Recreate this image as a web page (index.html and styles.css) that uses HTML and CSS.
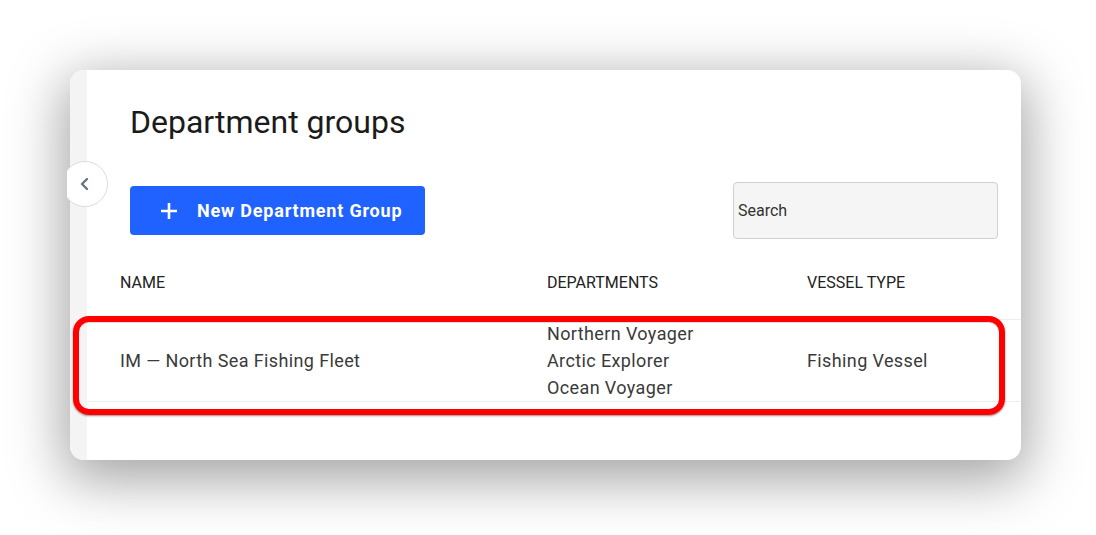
FILE: index.html
```html
<!DOCTYPE html>
<html lang="en">
<head>
<meta charset="utf-8">
<title>Department groups</title>
<link rel="stylesheet" href="styles.css">
</head>
<body>
<div class="card">
  <div class="strip"></div>
  <button class="back" aria-label="Collapse">
    <svg width="12" height="14" viewBox="0 0 12 14"><path d="M8 2 L3 7 L8 12" fill="none" stroke="#6b7280" stroke-width="2.4" stroke-linecap="round" stroke-linejoin="round"/></svg>
  </button>
  <main class="main">
    <h1 class="title">Department groups</h1>
    <div class="toolbar">
      <button class="new-btn">
        <svg class="plus" width="18" height="18" viewBox="0 0 18 18"><path d="M9 1 V17 M1 9 H17" stroke="#fff" stroke-width="2.6"/></svg>
        <span>New Department Group</span>
      </button>
      <input class="search" type="text" placeholder="Search">
    </div>
    <div class="table">
      <div class="th">NAME</div>
      <div class="th">DEPARTMENTS</div>
      <div class="th">VESSEL TYPE</div>
      <div class="td">IM — North Sea Fishing Fleet</div>
      <div class="td td-list">Northern Voyager<br>Arctic Explorer<br>Ocean Voyager</div>
      <div class="td">Fishing Vessel</div>
    </div>
  </main>
  <div class="highlight"></div>
</div>
</body>
</html>
```

FILE: styles.css
```css
* { box-sizing: border-box; }
html, body { margin: 0; background: #fff; }
body {
  min-height: 535px;
  padding: 70px 0 75px 70px;
  font-family: Roboto, "Liberation Sans", sans-serif;
  color: #222;
}
.card {
  position: relative;
  width: 951px;
  height: 390px;
  background: #fff;
  border-radius: 14px;
  display: flex;
  box-shadow: 0 14px 55px 6px rgba(0,0,0,0.36);
}
.strip {
  width: 17px;
  flex: none;
  background: #f4f4f5;
  border-radius: 14px 0 0 14px;
}
.back {
  position: absolute;
  left: -8px;
  top: 91px;
  width: 46px;
  height: 46px;
  border-radius: 50%;
  border: 1px solid #d9dbe0;
  background: #fff;
  padding: 0;
  display: flex;
  align-items: center;
  justify-content: center;
  clip-path: inset(0 0 0 5px);
}
.main {
  flex: 1;
  padding: 32px 23px 0 0;
}
.title {
  margin: 0 0 0 43px;
  font-size: 32px;
  line-height: 40px;
  font-weight: 400;
  color: #1b1b1b;
}
.toolbar {
  margin: 40px 0 0 43px;
  height: 57px;
  display: flex;
  align-items: center;
  justify-content: space-between;
}
.new-btn {
  width: 295px;
  height: 49px;
  border: 0;
  border-radius: 4px;
  background: #1f62ff;
  color: #fff;
  font-family: Roboto, "Liberation Sans", sans-serif;
  font-size: 18px;
  font-weight: 700;
  letter-spacing: 0.8px;
  display: flex;
  align-items: center;
  padding: 0 0 0 30px;
  gap: 19px;
}
.plus { flex: none; }
.search {
  width: 265px;
  height: 57px;
  border: 1px solid #cfd0d3;
  border-radius: 4px;
  background: #f5f5f5;
  padding: 0 0 0 4px;
  font-family: Roboto, "Liberation Sans", sans-serif;
  font-size: 16px;
  color: #333;
}
.search::placeholder { color: #333; }
.table {
  margin: 11px -23px 0 0;
  display: grid;
  grid-template-columns: 427px 260px 1fr;
}
.th {
  height: 69px;
  padding: 21px 0 0 33px;
  font-size: 16px;
  line-height: 24px;
  color: #222;
}
.td {
  padding-left: 33px;
  font-size: 18px;
  line-height: 27px;
  letter-spacing: 0.38px;
  color: #3a3a3a;
  border-top: 1px solid #eeeeef;
  border-bottom: 1px solid #eeeeef;
  display: flex;
  align-items: center;
}
.td-list { display: block; }
.highlight {
  position: absolute;
  left: 3px;
  top: 246px;
  width: 932px;
  height: 99px;
  border: 6px solid #ff0000;
  border-radius: 16px;
  box-shadow: 0 1px 2px rgba(0,0,0,0.45), inset 0 1px 1px rgba(0,0,0,0.15);
  pointer-events: none;
}
```
